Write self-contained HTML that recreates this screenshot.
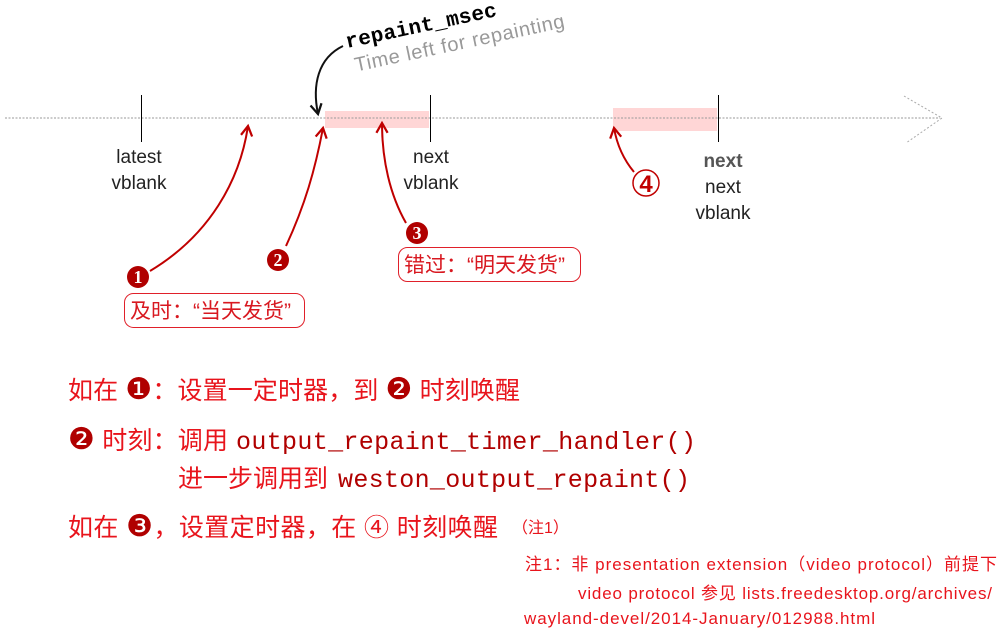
<!DOCTYPE html>
<html><head><meta charset="utf-8"><style>
html,body{margin:0;padding:0;background:#fff;}
svg{display:block;}
.cj{font-family:"Liberation Sans","Noto Sans CJK SC",sans-serif;}
</style></head><body>
<svg width="1000" height="631" viewBox="0 0 1000 631" xmlns="http://www.w3.org/2000/svg">
<defs>
<marker id="ar" viewBox="0 0 10 10" refX="8" refY="5" markerWidth="7" markerHeight="7" orient="auto-start-reverse"><path d="M1,1 L8,5 L1,9" fill="none" stroke="#c00000" stroke-width="1.6"/></marker>
<marker id="ab" viewBox="0 0 10 10" refX="8" refY="5" markerWidth="7" markerHeight="7" orient="auto-start-reverse"><path d="M1,1 L8,5 L1,9" fill="none" stroke="#111" stroke-width="1.6"/></marker>
</defs>
<rect x="325" y="111" width="104" height="17" fill="#ffd6d6"/>
<rect x="613" y="108" width="104" height="23" fill="#ffd6d6"/>
<line x1="5" y1="118" x2="940" y2="118" stroke="#999" stroke-width="1" stroke-dasharray="2,1.5"/>
<path d="M904,96 L942,118 L906,143" fill="none" stroke="#aaa" stroke-width="1" stroke-dasharray="2,2"/>
<line x1="141.5" y1="95" x2="141.5" y2="142" stroke="#000"/>
<line x1="430.5" y1="95" x2="430.5" y2="142" stroke="#000"/>
<line x1="718.5" y1="95" x2="718.5" y2="142" stroke="#000"/>
<g font-family="Liberation Sans,sans-serif" font-size="19" fill="#222" text-anchor="middle">
<text x="139" y="163">latest</text><text x="139" y="189">vblank</text>
<text x="431" y="163">next</text><text x="431" y="189">vblank</text>
<text x="723" y="167" font-weight="bold" fill="#555">next</text>
<text x="723" y="193">next</text><text x="723" y="219">vblank</text>
</g>
<g transform="rotate(-12 347 48)">
<text x="347" y="48" font-family="Liberation Mono,monospace" font-weight="bold" font-size="21" fill="#000" textLength="154">repaint_msec</text>
<text x="351" y="73" font-family="Liberation Sans,sans-serif" font-size="20" fill="#999" textLength="214">Time left for repainting</text>
</g>
<path d="M343,46 C318,58 312,85 318,114" fill="none" stroke="#111" stroke-width="2" marker-end="url(#ab)"/>
<g fill="none" stroke="#c00000" stroke-width="2">
<path d="M150,271 C210,235 240,180 248,126" marker-end="url(#ar)"/>
<path d="M286,246 C305,205 315,170 323,128" marker-end="url(#ar)"/>
<path d="M406,223 C390,195 382,160 382,123" marker-end="url(#ar)"/>
<path d="M634,172 C624,160 617,145 614,128" marker-end="url(#ar)"/>
</g>
<g font-family="Liberation Serif,serif" font-weight="bold" font-size="18" fill="#fff" text-anchor="middle">
<circle cx="138" cy="277" r="11" fill="#b00000"/><text x="138" y="283">1</text>
<circle cx="278" cy="260" r="11" fill="#b00000"/><text x="278" y="266">2</text>
<circle cx="417" cy="233" r="11" fill="#b00000"/><text x="417" y="239">3</text>
</g>
<circle cx="646" cy="183" r="13" fill="#fff" stroke="#c00000" stroke-width="1.5"/>
<text x="646" y="192" text-anchor="middle" font-family="Liberation Sans,sans-serif" font-weight="bold" font-size="24" fill="#c00000">4</text>
<rect x="124.5" y="293.5" width="180" height="34" rx="9" fill="none" stroke="#e0202a"/>
<text x="130" y="318" class="cj" font-size="21" fill="#d81820">及时：“当天发货”</text>
<rect x="398.5" y="247.5" width="182" height="34" rx="9" fill="none" stroke="#e0202a"/>
<text x="404" y="272" class="cj" font-size="21" fill="#d81820">错过：“明天发货”</text>
<g class="cj" font-size="25" fill="#e8141c">
<text x="68" y="399" textLength="452">如在 <tspan font-family="DejaVu Sans" font-size="30" fill="#b00000">❶</tspan>：设置一定时器，到 <tspan font-family="DejaVu Sans" font-size="30" fill="#b00000">❷</tspan> 时刻唤醒</text>
<text x="68" y="449" textLength="160"><tspan font-family="DejaVu Sans" font-size="30" fill="#b00000">❷</tspan> 时刻：调用</text>
<text x="236" y="449" font-family="Liberation Mono,monospace" font-size="25" fill="#b00000" textLength="460">output_repaint_timer_handler()</text>
<text x="178" y="487">进一步调用到</text>
<text x="338" y="487" font-family="Liberation Mono,monospace" font-size="25" fill="#b00000" textLength="352">weston_output_repaint()</text>
<text x="68" y="536" textLength="430">如在 <tspan font-family="DejaVu Sans" font-size="30" fill="#b00000">❸</tspan>，设置定时器，在 ④ 时刻唤醒</text>
<text x="512" y="533" font-size="16">（注1）</text>
</g>
<g class="cj" font-size="17" fill="#e8141c">
<text x="525" y="570" textLength="472">注1：非 presentation extension（video protocol）前提下</text>
<text x="578" y="599" textLength="414">video protocol 参见 lists.freedesktop.org/archives/</text>
<text x="524" y="624" textLength="351">wayland-devel/2014-January/012988.html</text>
</g>
</svg>
</body></html>
